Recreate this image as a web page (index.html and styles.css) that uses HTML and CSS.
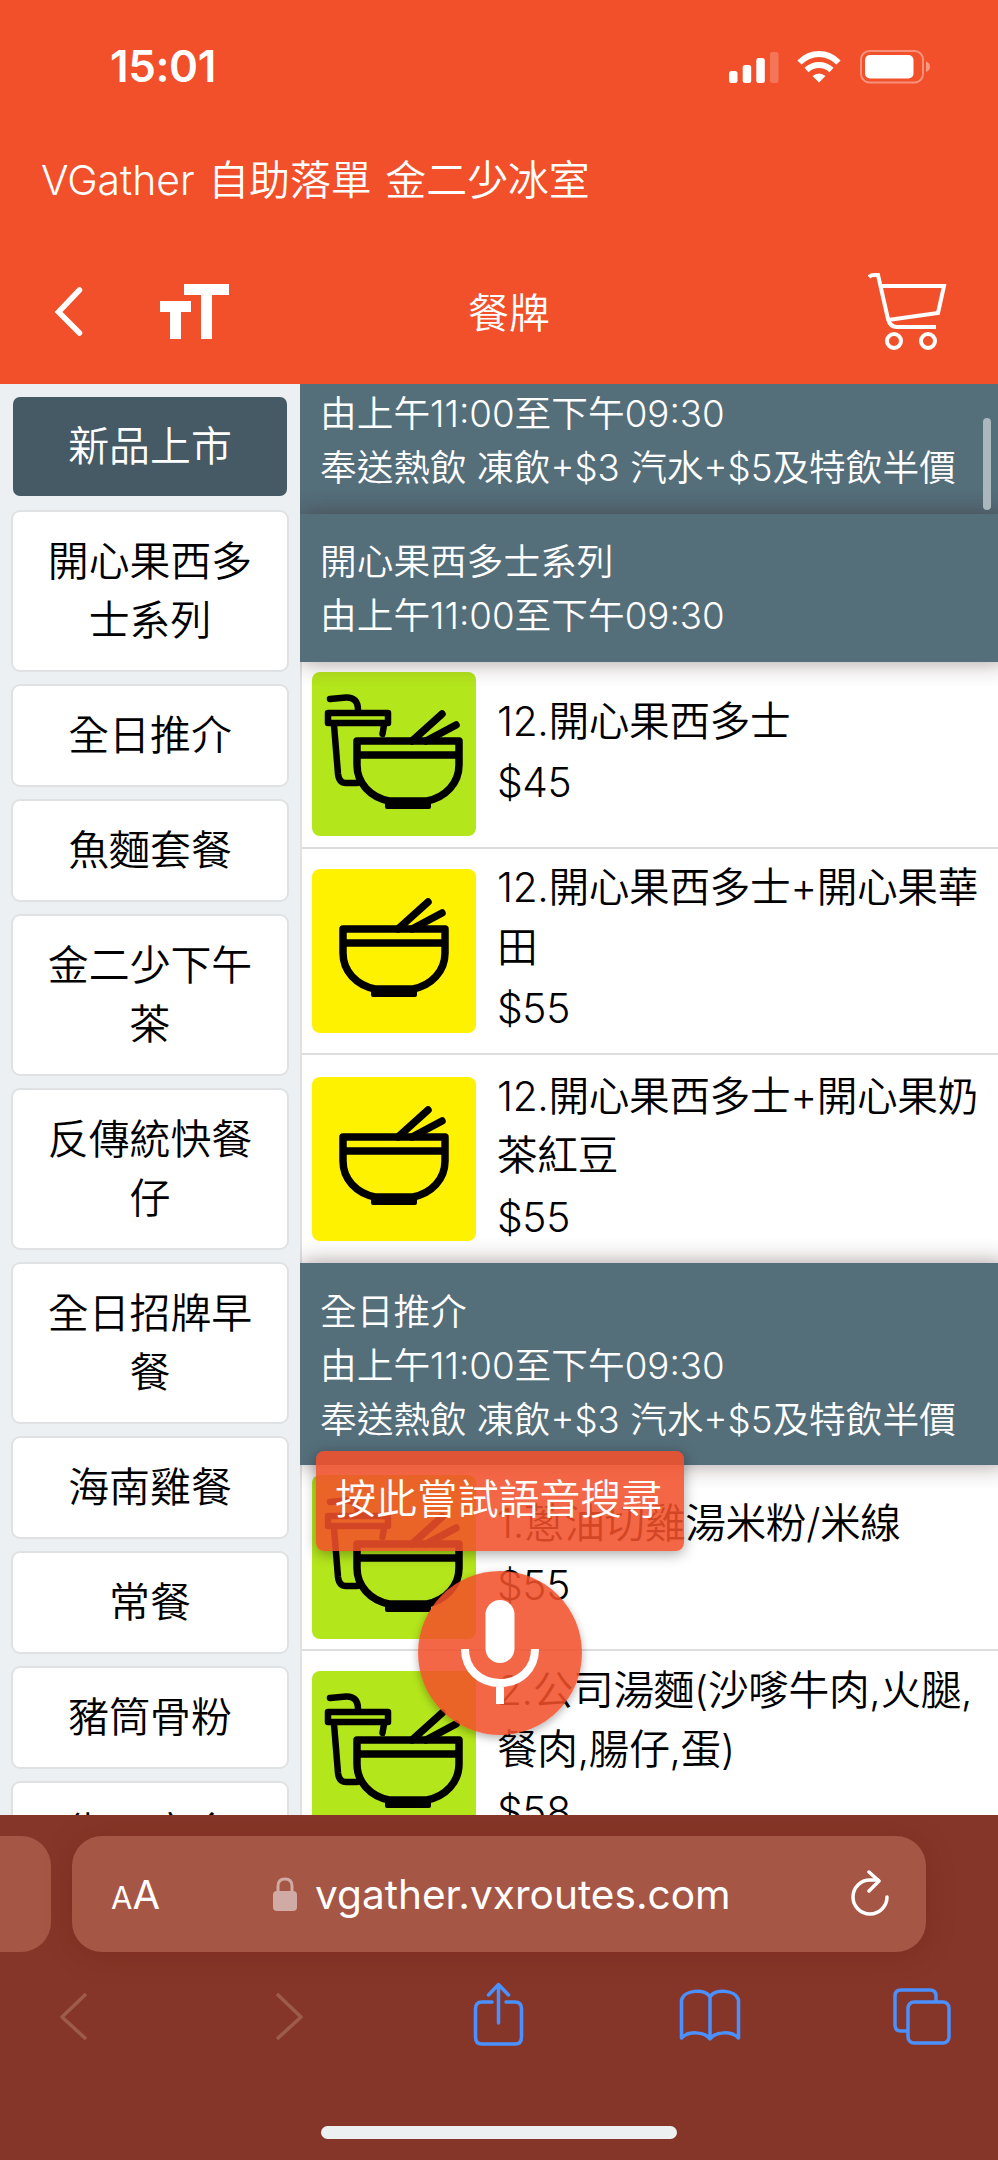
FILE: index.html
```html
<!DOCTYPE html>
<html lang="zh-HK">
<head>
<meta charset="utf-8">
<title>VGather 自助落單</title>
<link rel="stylesheet" href="styles.css">
</head>
<body>
<svg class="defs" width="0" height="0" aria-hidden="true">
  <defs>
    <g id="bowl-shape" fill="none" stroke="#000" stroke-width="7.500" stroke-linejoin="round">
      <path d="M0 0H102V24C102 42 89 56 70 60H32C13 56 0 42 0 24Z"/>
      <path d="M0 14H102"/>
      <path d="M30 60H72V66H30Z" fill="#000" stroke-width="4"/>
      <path d="M55 0L85 -27M69 0L99 -16" stroke-linecap="round"/>
    </g>
    <symbol id="bowl" viewBox="0 0 164 164"><use href="#bowl-shape" x="31" y="60"/></symbol>
    <symbol id="combo" viewBox="0 0 164 164">
      <g fill="none" stroke="#000" stroke-width="6.500" stroke-linejoin="round" stroke-linecap="round">
        <path d="M18 27L34 25.500Q46 25 46 38"/>
        <path d="M16 41H76V51H16Z"/>
        <path d="M22 53L26 102Q27 111 34 111H45M72 53L70.500 62"/>
      </g>
      <use href="#bowl-shape" x="45" y="69"/>
    </symbol>
  </defs>
</svg>
<div class="phone">
  <header class="header">
    <div class="status">
      <span class="clock">15:01</span>
      <div class="status-icons">
        <svg width="51" height="34" viewBox="0 0 51 34" fill="#fff"><rect x="0" y="21" width="8.500" height="12" rx="2.500"/><rect x="13.700" y="15" width="8.500" height="18" rx="2.500"/><rect x="27.300" y="8" width="8.500" height="25" rx="2.500"/><rect x="41" y="2" width="8.500" height="31" rx="2.500" opacity=".22"/></svg>
        <svg class="wifi" width="44" height="34" viewBox="0 0 44 34" fill="none" stroke="#fff" stroke-width="6"><path d="M2.500 12.500Q11 4 22 4T41.500 12.500"/><path d="M9.500 20Q15 15 22 15T34.500 20"/><path d="M22 32.500L15.500 26Q22 21 28.500 26Z" fill="#fff" stroke="none"/></svg>
        <svg class="battery" width="70" height="34" viewBox="0 0 70 34"><rect x="1" y="1" width="62" height="31.500" rx="8.500" fill="none" stroke="#fff" stroke-opacity=".38" stroke-width="2"/><rect x="5" y="5" width="48.500" height="23.500" rx="5" fill="#fff"/><path d="M66 11.500Q70 13 70 16.700T66 22Z" fill="#fff" opacity=".42"/></svg>
      </div>
    </div>
    <div class="site-title">VGather 自助落單 金二少冰室</div>
    <nav class="nav">
      <svg class="back" width="34" height="54" viewBox="0 0 34 54" fill="none" stroke="#fff" stroke-width="5.500" stroke-linecap="round"><path d="M29.500 5L8.500 27L29.500 48"/></svg>
      <svg class="text-size" width="69" height="56" viewBox="0 0 69 56" fill="#fff"><path d="M24 0H69V11H52V55H41V11H24ZM0 17H31V28H21V55H10V28H0Z"/></svg>
      <span class="nav-title">餐牌</span>
      <svg class="cart" width="80" height="78" viewBox="0 0 80 78" fill="none" stroke="#fff" stroke-width="4"><path d="M1 4Q3 2 6 2H10L20 46Q22 54 29 54H68"/><path d="M13 13H76L70 40L20 47"/><circle cx="26" cy="68" r="7"/><circle cx="60" cy="68" r="7"/></svg>
    </nav>
  </header>

  <main class="content">
    <aside class="categories">
      <button class="category active">新品上市</button>
      <button class="category">開心果西多士系列</button>
      <button class="category">全日推介</button>
      <button class="category">魚麵套餐</button>
      <button class="category">金二少下午茶</button>
      <button class="category">反傳統快餐仔</button>
      <button class="category">全日招牌早餐</button>
      <button class="category">海南雞餐</button>
      <button class="category">常餐</button>
      <button class="category">豬筒骨粉</button>
      <button class="category">街四寶盒</button>
    </aside>
    <section class="menu">
      <div class="group first"><p>由上午11:00至下午09:30</p><p>奉送熱飲 凍飲+$3 汽水+$5及特飲半價</p></div>
      <div class="group second"><p>開心果西多士系列</p><p>由上午11:00至下午09:30</p></div>
      <article class="item"><svg class="thumb green"><use href="#combo"/></svg><div class="info"><p>12.開心果西多士</p><p class="price">$45</p></div></article>
      <article class="item tall"><svg class="thumb yellow"><use href="#bowl"/></svg><div class="info"><p>12.開心果西多士+開心果華田</p><p class="price">$55</p></div></article>
      <article class="item tall last"><svg class="thumb yellow"><use href="#bowl"/></svg><div class="info"><p>12.開心果西多士+開心果奶茶紅豆</p><p class="price">$55</p></div></article>
      <div class="group third"><p>全日推介</p><p>由上午11:00至下午09:30</p><p>奉送熱飲 凍飲+$3 汽水+$5及特飲半價</p></div>
      <article class="item"><svg class="thumb green"><use href="#combo"/></svg><div class="info"><p>1.蔥油切雞湯米粉/米線</p><p class="price">$55</p></div></article>
      <article class="item tall"><svg class="thumb green"><use href="#combo"/></svg><div class="info"><p>2.公司湯麵(沙嗲牛肉,火腿,餐肉,腸仔,蛋)</p><p class="price">$58</p></div></article>
    </section>
    <span class="scrollbar"></span>
    <div class="voice-tip">按此嘗試語音搜尋</div>
    <button class="mic"><svg width="80" height="108" viewBox="0 0 80 108" fill="none" stroke="#fff"><rect x="25.500" y="1" width="29" height="63" rx="14.500" fill="#fff" stroke="none"/><path d="M5 50C5 70 20 84 40 84S75 70 75 50M40 84V105" stroke-width="8"/></svg></button>
  </main>

  <footer class="browser">
    <div class="address-row">
      <div class="prev-tab"></div>
      <div class="address">
        <span class="aa"><small>A</small>A</span>
        <div class="url">
          <svg width="24" height="34" viewBox="0 0 24 34"><rect y="14" width="24" height="20" rx="4" fill="#d0aaa4"/><path d="M5 15V9Q5 2 12 2T19 9V15" fill="none" stroke="#d0aaa4" stroke-width="3"/></svg>
          <span>vgather.vxroutes.com</span>
        </div>
        <svg class="reload" width="40" height="48" viewBox="0 0 40 48" fill="none" stroke="#fff" stroke-width="3.500" stroke-linecap="round" stroke-linejoin="round"><path d="M37 27A17 17 0 1 1 20 10H28"/><path d="M19 2L29 11L19 21"/></svg>
      </div>
    </div>
    <div class="toolbar">
      <svg class="dim" viewBox="0 0 64 66"><path d="M44 12L20 35L44 57"/></svg>
      <svg class="dim" viewBox="0 0 64 66"><path d="M23 12L47 35L23 57"/></svg>
      <svg viewBox="0 0 64 66"><path d="M26 20H16Q9.500 20 9.500 27V55Q9.500 62 16 62H49Q55.500 62 55.500 55V27Q55.500 20 49 20H40M32.500 41V3M22.500 13L32.500 2.500L42.500 13" stroke-linecap="round"/></svg>
      <svg viewBox="0 0 64 66"><path d="M32 15V57C26 49 10 49 3.500 56V18C6 8 27 6 32 15C37 6 58 8 60.500 18V56C54 49 38 49 32 57"/></svg>
      <svg viewBox="0 0 64 66"><rect x="18" y="20" width="41" height="41" rx="6"/><path d="M46 19V14Q46 8 40 8H11Q5 8 5 14V43Q5 49 11 49H17"/></svg>
    </div>
    <div class="home-indicator"></div>
  </footer>
</div>
</body>
</html>
```
FILE: styles.css
```css
* { box-sizing: border-box; }
body { margin: 0; font-family: Inter, "Noto Sans CJK TC", sans-serif; font-size: 40.9px; color: #000; }
p { margin: 0; }
button { font: inherit; border: 0; padding: 0; }
.defs { position: absolute; }
.phone { width: 998px; height: 2160px; overflow: hidden; display: flex; flex-direction: column; }

.header { height: 384px; flex: none; background: #f1502b; color: #fff; padding-top: 44px; }
.status { height: 45px; display: flex; justify-content: space-between; align-items: center; padding: 0 68px 0 110px; }
.clock { font-size: 44px; font-weight: 600; line-height: 45px; letter-spacing: -.4px; }
.status-icons { display: flex; align-items: center; }
.wifi { margin-left: 17px; }
.battery { margin-left: 19px; }
.site-title { margin: 61px 0 0 41px; height: 60px; line-height: 60px; font-weight: 350; word-spacing: 2px; }
.nav { margin-top: 62px; height: 80px; display: flex; align-items: center; padding: 0 50px 0 50px; }
.text-size { margin-left: 76px; }
.nav-title { margin: -3px 0 0 239px; width: 84px; font-weight: 350; }
.cart { margin-left: auto; }

.content { height: 1431px; display: flex; position: relative; overflow: hidden; background: #fff; }
.categories { width: 300px; flex: none; background: #edf0f2; padding: 11px 11px 0; display: flex; flex-direction: column; gap: 12px; }
.category { flex: none; background: #fff; border: 2px solid #dfe1e3; border-radius: 9px; padding: 20px 30px; line-height: 59px; color: #000; text-align: center; font-weight: 350; }
.category.active { background: #455a64; color: #fff; border-color: #edf0f2; }

.menu { flex: 1; border-left: 2px solid #dfe1e3; }
.group { margin-left: -2px; background: #546e7a; color: #fff; padding: 21px 20px; font-size: 36.7px; line-height: 53.8px; white-space: nowrap; position: relative; box-shadow: 0 0 22px rgba(60, 30, 30, .45); clip-path: inset(-24px 0 -24px 0); font-weight: 350; }
.group.first { height: 130px; padding-top: 3px; box-shadow: none; }
.group.second { height: 148px; }
.group.third { height: 201.500px; padding-top: 22px; }
.item { height: 186.500px; padding: 9px 10px; display: flex; align-items: center; border-bottom: 2px solid #ddd; }
.item.tall { height: 206.500px; }
.item.last { height: 208px; border-bottom: 0; }
.thumb { width: 164px; height: 164px; flex: none; border-radius: 8px; }
.green { background: #b4e61c; }
.yellow { background: #fff200; }
.info { margin: -3px 0 0 21px; width: 500px; flex: none; font-size: 40.7px; line-height: 59.5px; letter-spacing: -.35px; font-weight: 350; }
.price { line-height: 63px; }

.scrollbar { position: absolute; left: 983px; top: 34px; width: 8px; height: 92px; border-radius: 4px; background: #aab7bd; }
.voice-tip { position: absolute; left: 316px; top: 1067px; width: 368px; height: 100px; padding-left: 19px; line-height: 97px; color: #fff; border-radius: 8px; background: rgba(242, 80, 43, .87); box-shadow: 0 3px 14px rgba(0, 0, 0, .35); white-space: nowrap; font-weight: 350; }
.mic { position: absolute; left: 418px; top: 1187px; width: 164px; height: 164px; border-radius: 50%; background: rgba(242, 80, 43, .87); box-shadow: 0 3px 9px rgba(0, 0, 0, .3); display: flex; align-items: center; justify-content: center; }

.browser { flex: 1; background: #863628; padding-top: 21px; }
.address-row { display: flex; gap: 21px; height: 116px; }
.prev-tab { width: 51px; background: #a65645; border-radius: 0 30px 30px 0; }
.address { width: 854px; background: #a65645; border-radius: 30px; color: #fff; display: flex; align-items: center; padding: 0 36px 0 39px; box-shadow: 0 4px 28px rgba(100, 20, 10, .25); }
.aa { width: 162px; font-size: 40px; }
.aa small { font-size: 31px; }
.url { display: flex; align-items: center; gap: 18px; flex: 1; }
.url span { font-size: 40.6px; }
.toolbar { display: flex; justify-content: space-between; margin: 30px 44px 0 42px; }
.toolbar svg { width: 64px; height: 66px; fill: none; stroke: #4a90ff; stroke-width: 3.500; stroke-linejoin: round; }
.toolbar .dim { stroke: #9c5c4b; }
.home-indicator { width: 356px; height: 13px; border-radius: 7px; background: #edf0f1; margin: 78px auto 0; }
```
